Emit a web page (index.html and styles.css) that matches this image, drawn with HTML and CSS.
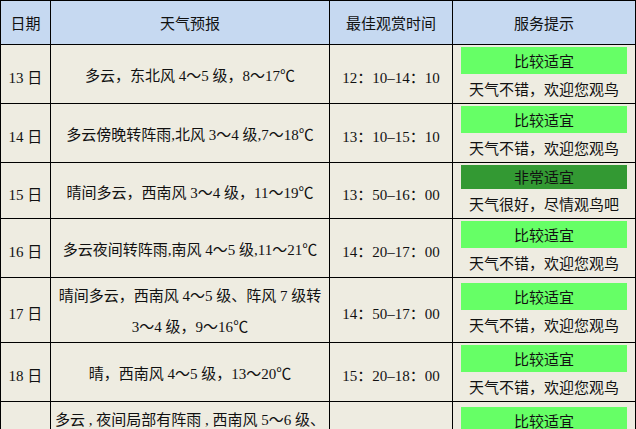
FILE: index.html
```html
<!DOCTYPE html>
<html lang="zh-CN">
<head>
<meta charset="utf-8">
<title>观鸟天气</title>
<link rel="stylesheet" href="styles.css">
</head>
<body>
<table class="schedule">
  <colgroup>
    <col class="c-date">
    <col class="c-fc">
    <col class="c-time">
    <col class="c-tip">
  </colgroup>
  <thead>
    <tr><th>日期</th><th>天气预报</th><th>最佳观赏时间</th><th>服务提示</th></tr>
  </thead>
  <tbody>
    <tr>
      <td class="date">13 日</td>
      <td class="fc">多云，东北风 4～5 级，8～17<span class="cjk">℃</span></td>
      <td class="time">12：10–14：10</td>
      <td class="tip"><div class="badge good">比较适宜</div><div class="note">天气不错，欢迎您观鸟</div></td>
    </tr>
    <tr>
      <td class="date">14 日</td>
      <td class="fc">多云傍晚转阵雨,北风 3～4 级,7～18<span class="cjk">℃</span></td>
      <td class="time">13：10–15：10</td>
      <td class="tip"><div class="badge good">比较适宜</div><div class="note">天气不错，欢迎您观鸟</div></td>
    </tr>
    <tr>
      <td class="date">15 日</td>
      <td class="fc">晴间多云，西南风 3～4 级，11～19<span class="cjk">℃</span></td>
      <td class="time">13：50–16：00</td>
      <td class="tip"><div class="badge best">非常适宜</div><div class="note">天气很好，尽情观鸟吧</div></td>
    </tr>
    <tr>
      <td class="date">16 日</td>
      <td class="fc">多云夜间转阵雨,南风 4～5 级,11～21<span class="cjk">℃</span></td>
      <td class="time">14：20–17：00</td>
      <td class="tip"><div class="badge good">比较适宜</div><div class="note">天气不错，欢迎您观鸟</div></td>
    </tr>
    <tr>
      <td class="date">17 日</td>
      <td class="fc">晴间多云，西南风 4～5 级、阵风 7 级转<br>3～4 级，9～16<span class="cjk">℃</span></td>
      <td class="time">14：50–17：00</td>
      <td class="tip"><div class="badge good">比较适宜</div><div class="note">天气不错，欢迎您观鸟</div></td>
    </tr>
    <tr>
      <td class="date">18 日</td>
      <td class="fc">晴，西南风 4～5 级，13～20<span class="cjk">℃</span></td>
      <td class="time">15：20–18：00</td>
      <td class="tip"><div class="badge good">比较适宜</div><div class="note">天气不错，欢迎您观鸟</div></td>
    </tr>
    <tr>
      <td class="date">19 日</td>
      <td class="fc">多云 , 夜间局部有阵雨 , 西南风 5～6 级、<br>阵风 7 级，12～20<span class="cjk">℃</span></td>
      <td class="time">15：50–18：00</td>
      <td class="tip"><div class="badge good">比较适宜</div><div class="note">天气不错，欢迎您观鸟</div></td>
    </tr>
  </tbody>
</table>
</body>
</html>
```
FILE: styles.css
```css
html, body {
  margin: 0;
  padding: 0;
  background: #ffffff;
}

.schedule {
  border-collapse: collapse;
  table-layout: fixed;
  width: 635px;
  font-family: "Liberation Serif", "Noto Sans CJK SC", serif;
  font-size: 15px;
  color: #111111;
}

.cjk {
  font-family: "Noto Sans CJK SC", sans-serif;
}

.c-date { width: 50px; }
.c-fc { width: 279px; }
.c-time { width: 123px; }
.c-tip { width: 183px; }

.schedule th,
.schedule td {
  border: 1px solid #000000;
  padding: 0;
  text-align: center;
  vertical-align: middle;
}

.schedule th {
  background: #c6d9f1;
  font-weight: normal;
  height: 44px;
  line-height: 20px;
  padding-top: 3px;
  box-sizing: border-box;
}

.schedule td {
  background: #eeece1;
}

.schedule .fc {
  line-height: 30px;
  padding: 3px 0 0;
  white-space: nowrap;
  overflow: hidden;
}

.schedule .date,
.schedule .time {
  padding-top: 5px;
}

.schedule .tip {
  padding: 2px 8px;
}

.badge {
  height: 27px;
  line-height: 30px;
}

.badge.good {
  background: #66ff66;
}

.badge.best {
  background: #339933;
  height: 24px;
  line-height: 26px;
}

.note {
  height: 27px;
  line-height: 32px;
}
```
